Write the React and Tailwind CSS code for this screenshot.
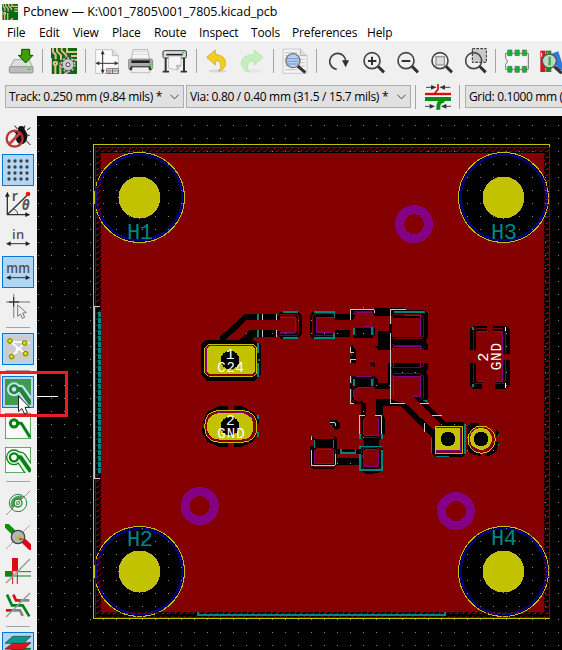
import React from "react";

const Icon = ({ x, y, children }) => (
  <svg className="block h-[26px] w-[26px] shrink-0" viewBox={`${x} ${y} 78 78`} fill="none">
    {children}
  </svg>
);

const Tool = ({ x, y = 144, children }) => (
  <div className="flex h-[34px] w-[34px] shrink-0 items-center justify-center">
    <Icon x={x} y={y}>{children}</Icon>
  </div>
);

const SideTool = ({ y, on, children }) => (
  <div className="flex h-[34px] w-9 shrink-0 items-center justify-center">
    <div className={on ? "flex h-8 w-8 items-center justify-center border border-[#0078d7] bg-[#b3d7f3]" : "flex h-8 w-8 items-center justify-center"}>
      <Icon x={15} y={y}>{children}</Icon>
    </div>
  </div>
);

const VSep = () => (
  <div className="flex w-[9px] shrink-0 justify-center">
    <div className="h-6 w-px bg-[#a5a5a5]" />
  </div>
);
const HSep = () => (
  <div className="flex h-[9px] w-9 shrink-0 items-center justify-center">
    <div className="h-px w-6 bg-[#a5a5a5]" />
  </div>
);

const Lens = ({ cx, cy, fill = "none", children }) => (
  <>
    <path d={`M${cx + 17} ${cy + 16}L${cx + 36} ${cy + 35}`} stroke="#303030" strokeWidth="9" />
    <circle cx={cx} cy={cy} r="24" fill={fill} stroke="#454545" strokeWidth="5" />
    {children}
  </>
);

const Board = ({ x, y }) => (
  <g>
    <rect x={x} y={y} width="78" height="78" fill="#0a6a12" />
    <g transform={`translate(${x} ${y})`} stroke="#e3c08f" strokeWidth="6">
      <path d="M6 0V12L14 20V34M18 0V10L30 22V36M32 0V8L46 22V30M48 0V12H78M60 24H78M0 30V78M13 48V78" />
      <circle cx="13" cy="46" r="5" fill="#0a6a12" />
      <path d="M40 78L54 70M60 36H78M28 44V78" />
    </g>
  </g>
);

const MENUS = [
  ["File", "w-8"], ["Edit", "w-[34px]"], ["View", "w-[39px]"], ["Place", "w-[42px]"], ["Route", "w-[45px]"],
  ["Inspect", "w-[52px]"], ["Tools", "w-[41px]"], ["Preferences", "w-[75px]"], ["Help", "w-10"],
];

const Combo = ({ label, className, textClass }) => (
  <div className={`flex h-[23px] shrink-0 items-center justify-between border border-[#adadad] bg-[#e1e1e1] pl-[3px] pr-1 ${className}`}>
    <span className={`whitespace-pre leading-none ${textClass}`}>{label}</span>
    <svg className="h-[6px] w-[9px] shrink-0" viewBox="0 0 9 6" fill="none" stroke="#444"><path d="M.5 .8L4.5 4.8L8.5 .8" /></svg>
  </div>
);

function MainToolbar() {
  return (
    <div className="flex h-10 w-[700px] items-center pl-1">
      <Tool x={24}>
        <path d="M30 202L42 179H88L98 202" fill="#dedede" stroke="#888" strokeWidth="2" />
        <rect x="28" y="200" width="71" height="19" rx="3" fill="#bcbcbc" stroke="#777" strokeWidth="2" />
        <rect x="83" y="205" width="8" height="5" fill="#28e020" />
        <path d="M65 148H89V166H99L77 189L55 166H65Z" fill="#3c9e08" stroke="#174d00" strokeWidth="3" />
      </Tool>
      <VSep />
      <Tool x={153}>
        <Board x={153} y={144} />
        <circle cx="204" cy="194" r="21" stroke="#555" strokeWidth="7" strokeDasharray="8 5" />
        <circle cx="204" cy="194" r="18" fill="#ccc" stroke="#444" strokeWidth="3" />
        <circle cx="204" cy="194" r="20" stroke="#c8c8c8" strokeWidth="5" strokeDasharray="6 7" />
        <circle cx="204" cy="194" r="6" fill="#eee" stroke="#444" strokeWidth="3" />
      </Tool>
      <VSep />
      <Tool x={282}>
        <path d="M287 149H337L355 167V220H287Z" fill="#fafafa" stroke="#aaa" strokeWidth="2" />
        <path d="M337 149V167H355" fill="#ddd" stroke="#aaa" strokeWidth="2" />
        <path d="M308 157V216M292 190H350" stroke="#333" strokeWidth="3" />
        <path d="M308 151L314 163H302ZM308 221L314 209H302ZM286 190L298 184V196ZM356 190L344 184V196Z" fill="#333" />
        <path d="M320 206H355V220H320ZM320 213H355M338 206V220" fill="#fff" stroke="#333" strokeWidth="2" />
        <path d="M325 210H332M343 210H350M325 217H332" stroke="#a33" strokeWidth="2" />
      </Tool>
      <Tool x={384}>
        <path d="M394 180L399 149H443L449 180Z" fill="#f4f4f4" stroke="#999" strokeWidth="2" />
        <path d="M401 155H441M399 163H443" stroke="#ddd" strokeWidth="3" />
        <rect x="385" y="177" width="73" height="31" rx="5" fill="#a9a9a9" stroke="#777" strokeWidth="2" />
        <path d="M394 181H449V189H394Z" fill="#222" />
        <path d="M393 199H450L455 211H388Z" fill="#222" />
        <path d="M398 202H445L450 218H393Z" fill="#eee" stroke="#aaa" strokeWidth="2" />
        <rect x="447" y="193" width="6" height="4" fill="#2d2" />
      </Tool>
      <Tool x={486}>
        <path d="M497 170V213M552 170V213" stroke="#333" strokeWidth="6" />
        <path d="M488 215H507M542 215H561" stroke="#333" strokeWidth="5" />
        <rect x="489" y="152" width="70" height="22" rx="4" fill="#ddd" stroke="#333" strokeWidth="3" />
        <path d="M499 164H548" stroke="#222" strokeWidth="5" />
        <rect x="546" y="156" width="7" height="4" fill="#2d2" />
        <path d="M506 168H543V196L532 210L506 205Z" fill="#f5f5f5" stroke="#aaa" strokeWidth="2" />
        <path d="M532 210L530 196H543" fill="#ccc" stroke="#999" strokeWidth="2" />
      </Tool>
      <VSep />
      <Tool x={615}>
        <ellipse cx="652" cy="213" rx="27" ry="5" fill="#d9d9d9" />
        <path d="M620 172L646 150V163Q677 166 677 191Q675 208 656 214Q666 202 661 190Q658 182 646 182V195Z" fill="#f3ce20" stroke="#c8a000" strokeWidth="2" />
      </Tool>
      <Tool x={717}>
        <ellipse cx="757" cy="213" rx="27" ry="5" fill="#e6e6e6" />
        <path d="M789 172L763 150V163Q723 166 724 191Q727 208 746 215Q738 202 744 190Q750 182 763 182V195Z" fill="#c4efbd" stroke="#a9dda2" strokeWidth="2" />
      </Tool>
      <VSep />
      <Tool x={3}>
        <path d="M6 147H58L78 167V220H6Z" fill="#f4f4f4" stroke="#b5b5b5" strokeWidth="2" />
        <path d="M58 147V167H78" fill="#ddd" stroke="#999" strokeWidth="2" />
        <path d="M12 158H50M12 167H54M12 178H72M12 188H72M12 198H72M12 209H50" stroke="#aaa" strokeWidth="2" />
        <path d="M50 198L73 218" stroke="#333" strokeWidth="9" />
        <circle cx="36" cy="182" r="21" fill="#b5cff2" stroke="#777" strokeWidth="4" />
        <path d="M19 176H53M18 184H54M20 192H52" stroke="#7a95c8" strokeWidth="3" />
      </Tool>
      <VSep />
      <Tool x={132}>
        <path d="M167 208A24 24 0 1 1 194 185" stroke="#404040" strokeWidth="5" />
        <path d="M183 181H204L194 202Z" fill="#303030" />
      </Tool>
      <Tool x={234}><Lens cx={273} cy={182}><path d="M261 183H286M273 170V195" stroke="#303030" strokeWidth="6" /></Lens></Tool>
      <Tool x={336}><Lens cx={375} cy={182}><path d="M362 183H388" stroke="#303030" strokeWidth="6" /></Lens></Tool>
      <Tool x={438}><Lens cx={477} cy={182}><rect x="465" y="170" width="25" height="25" fill="#ddd" stroke="#999" strokeWidth="4" /></Lens></Tool>
      <Tool x={540}>
        <rect x="574" y="146" width="42" height="41" fill="#c9c9c9" stroke="#222" strokeWidth="3" strokeDasharray="8 4" />
        <Lens cx={578} cy={182} />
      </Tool>
      <VSep />
      <Tool x={669}>
        <path d="M674 160H742V208H674V193Q684 183 674 176Z" fill="#f6f6f6" stroke="#777" strokeWidth="3" />
        <path d="M680 150H693V167H680ZM702 150H715V167H702ZM724 150H737V167H724ZM680 199H693V217H680ZM702 199H715V217H702ZM724 199H737V217H724Z" fill="#00c020" stroke="#666" strokeWidth="2" />
      </Tool>
      <Tool x={771}>
        <path d="M778 152H793V216H778Z" fill="#d9141a" />
        <path d="M794 152H811V216H794Z" fill="#17902a" />
        <path d="M814 160L832 154L849 207L832 216Z" fill="#3478dc" />
        <path d="M782 158V170M800 158V170" stroke="#fff" strokeWidth="3" />
        <path d="M820 200L842 220" stroke="#333" strokeWidth="9" />
        <circle cx="805" cy="183" r="21" fill="#b9dcc0" stroke="#555" strokeWidth="4" />
        <path d="M806 170V196" stroke="#45a555" strokeWidth="7" />
      </Tool>
    </div>
  );
}

function SideBar() {
  return (
    <div className="flex w-9 shrink-0 flex-col overflow-hidden pt-[3px]">
      <SideTool y={24}>
        <path d="M44 32L52 42M75 32L69 44M81 45L91 38M80 60L89 61M78 76L91 90M40 48L53 57" stroke="#111" strokeWidth="3" />
        <ellipse cx="64" cy="64" rx="18" ry="24" fill="#111" /><circle cx="64" cy="43" r="10" fill="#111" />
        <circle cx="44" cy="71" r="24" stroke="#bd3434" strokeWidth="7" />
        <path d="M28 87L60 54" stroke="#c84242" strokeWidth="8" />
      </SideTool>
      <SideTool y={126} on>
        <g fill="#404040">
          {[138, 156, 174, 192].map((y) => [27, 45, 63, 81].map((x) => <circle key={`${x}-${y}`} cx={x} cy={y} r="5" />))}
        </g>
      </SideTool>
      <SideTool y={228}>
        <path d="M22 240V299H84M23 298L83 239" stroke="#333" strokeWidth="4" />
        <path d="M22 230L29 245H15ZM91 299L76 292V306Z" fill="#222" />
        <path d="M37 284Q52 281 53 298" stroke="#555" strokeWidth="3" />
        <circle cx="84" cy="237" r="7" fill="#f11" />
        <text x="35" y="257" className="font-['Open_Sans',sans-serif] text-[44px] font-semibold" fill="#5a5050">r</text>
        <text x="65" y="285" className="font-['Open_Sans',sans-serif] text-[40px] font-bold italic" fill="#5a5050">θ</text>
      </SideTool>
      <SideTool y={330}>
        <text x="36" y="371" className="font-['Open_Sans',sans-serif] text-[39px] font-semibold" textLength="37" fill="#555">in</text>
        <path d="M27 386H82" stroke="#333" strokeWidth="3" /><path d="M18 386L32 379V393ZM91 386L77 379V393Z" fill="#222" />
      </SideTool>
      <SideTool y={432} on>
        <text x="19" y="474" className="font-['Open_Sans',sans-serif] text-[44px] font-semibold" textLength="71" lengthAdjust="spacingAndGlyphs" fill="#4d5055">mm</text>
        <path d="M27 488H82" stroke="#333" strokeWidth="3" /><path d="M18 488L32 481V495ZM91 488L77 481V495Z" fill="#222" />
      </SideTool>
      <SideTool y={9}>
        <path d="M18 36H30M54 36H90M41 12V24M41 50V84" stroke="#999" strokeWidth="4" />
        <path d="M27 36H57M41 22V50" stroke="#333" strokeWidth="4" />
        <path d="M53 45V79L61 72L67 85L74 82L68 69L79 68Z" fill="#f2f2f2" stroke="#777" strokeWidth="3" />
      </SideTool>
      <HSep />
      <SideTool y={138} on>
        <rect x="15" y="138" width="78" height="78" fill="#ccc" />
        <path d="M30 154L76 191M74 159L35 199M30 154L90 159M50 172V190" stroke="#fff" strokeWidth="5" />
        <g fill="#d8dc00" stroke="#777a00" strokeWidth="3"><circle cx="30" cy="153" r="7" /><circle cx="74" cy="159" r="7" /><circle cx="35" cy="200" r="7" /><circle cx="77" cy="191" r="7" /></g>
      </SideTool>
      <HSep />
      <SideTool y={267} on>
        <rect x="15" y="267" width="78" height="78" fill="#3e9b50" />
        <path d="M42 298H62L93 342" stroke="#c7e3f3" strokeWidth="27" strokeLinejoin="round" />
        <circle cx="42" cy="298" r="21" fill="#c7e3f3" />
        <path d="M42 298H62L93 342" stroke="#23843a" strokeWidth="14" strokeLinejoin="round" />
        <circle cx="42" cy="298" r="11" fill="#c7e3f3" stroke="#23843a" strokeWidth="8" />
      </SideTool>
      <SideTool y={369}>
        <rect x="16" y="370" width="76" height="76" fill="#fbfdfb" stroke="#4b9850" strokeWidth="3" />
        <path d="M45 400H64L90 442" stroke="#078014" strokeWidth="9" strokeLinejoin="round" />
        <circle cx="42" cy="400" r="11" fill="#fff" stroke="#078014" strokeWidth="9" />
      </SideTool>
      <SideTool y={471}>
        <rect x="16" y="472" width="76" height="76" fill="#fbfdfb" stroke="#4b9850" strokeWidth="3" />
        <path d="M42 502H62L92 546" stroke="#078014" strokeWidth="35" strokeLinejoin="round" />
        <circle cx="42" cy="502" r="24" fill="#078014" />
        <path d="M42 502H62L94 549" stroke="#eaf7e8" strokeWidth="28" strokeLinejoin="round" />
        <circle cx="42" cy="502" r="20" fill="#eaf7e8" />
        <path d="M42 502H62L92 545" stroke="#078014" strokeWidth="12" strokeLinejoin="round" />
        <circle cx="42" cy="502" r="12" fill="#fff" stroke="#078014" strokeWidth="7" />
      </SideTool>
      <HSep />
      <SideTool y={60}>
        <circle cx="54" cy="99" r="26" fill="#f4f8f4" stroke="#25843a" strokeWidth="3" />
        <path d="M36 117A26 26 0 0 1 72 81Z" fill="#4ca258" />
        <circle cx="54" cy="99" r="12" fill="#e9f7e9" stroke="#25843a" strokeWidth="4" /><circle cx="54" cy="99" r="5" stroke="#25843a" strokeWidth="2" />
        <path d="M18 135L90 63" stroke="#999" strokeWidth="3" />
      </SideTool>
      <SideTool y={162}>
        <path d="M15 162L50 196" stroke="#08910c" strokeWidth="16" /><path d="M60 202L96 237" stroke="#db0710" strokeWidth="16" />
        <path d="M18 237L90 165" stroke="#aaa" strokeWidth="3" />
        <circle cx="54" cy="201" r="20" fill="#b5b5b5" stroke="#444" strokeWidth="4" />
        <path d="M62 193V208H47Z" fill="#c4bc00" /><path d="M56 209L63 203L69 209Z" fill="#db0710" />
      </SideTool>
      <SideTool y={264}>
        <path d="M36 264H54V304H36Z" fill="#dc0b12" /><path d="M38 304V342M52 304V342" stroke="#dc0b12" strokeWidth="3" />
        <path d="M15 303H36V320H15Z" fill="#078515" /><path d="M54 305H93M36 318H93" stroke="#078515" strokeWidth="3" />
        <path d="M18 339L90 267" stroke="#999" strokeWidth="4" />
      </SideTool>
      <SideTool y={366}>
        <path d="M56 391H88M36 421H60L68 438" stroke="#858585" strokeWidth="8" />
        <path d="M40 374L48 391H60M18 421H36" stroke="#d90e14" strokeWidth="8" />
        <path d="M21 374L36 406H68L88 439" stroke="#087f17" strokeWidth="8" />
        <path d="M18 441L90 369" stroke="#999" strokeWidth="4" />
      </SideTool>
      <HSep />
      <SideTool y={495} on>
        <path d="M15 554L40 535H93L70 557Z" fill="#0a9212" stroke="#333" strokeWidth="2" />
        <path d="M15 537L40 518H93L70 539Z" fill="#e01418" stroke="#333" strokeWidth="2" />
        <path d="M15 520L38 499H93L70 520Z" fill="#079b96" stroke="#333" strokeWidth="2" />
      </SideTool>
    </div>
  );
}

const K = "#000";
const R = "#840000";
const T = "#008484";
const P = "#840084";
const Y = "#c2c200";
const W = "#c8c8c8";
const mono = "font-['Liberation_Mono',monospace]";

const Hole = ({ cx, cy, label, ty }) => (
  <g>
    <circle cx={cx} cy={cy} r="45" fill={K} />
    <circle cx={cx} cy={cy} r="42.7" fill="none" stroke="#000084" strokeWidth="2" />
    <circle cx={cx} cy={cy} r="45" fill="url(#dots)" stroke={Y} />
    <circle cx={cx} cy={cy} r="21" fill={Y} />
    <text x={cx - 12.5} y={ty} textLength="26" className={`${mono} text-[22px]`} fill={T}>{label}</text>
  </g>
);

const Line = ({ d, c, w = 3 }) => <path d={d} stroke={c} strokeWidth={w} fill="none" />;

function LeftPads() {
  return (
    <g transform="translate(190 300) scale(.33333)">
      <path d="M90 122V110L103 98L165 42H262V60H170L105 122V135ZM135 132L180 90H262V110H195L182 124V132Z" fill={K} />
      <path d="M201 42H207V60H201ZM201 90H207V110H201Z" fill={T} />
      <Line c={W} d="M217 42V60M260 42V60M217 90V110M260 90V110" />
      <path d="M262 45L272 35H325L335 45V106L325 116H272L262 106V94H270V103H314L320 97V53L314 48H270V60H262Z" fill={K} />
      <Line c={R} d="M264 47L270 43H320L327 50V100L320 107H270L264 102" />
      <Line c={T} w={5} d="M279 36H323M279 114H323" />
      <Line c={P} d="M270 52H317V96M270 97H315" />
      <path d="M48 120H190L212 134V225L195 242H50L34 225V134Z" fill={K} />
      <path d="M56 133H190L201 144V218L190 229H56L45 218V144Z" fill={R} stroke={Y} strokeWidth="3" />
      <path d="M60 138H186L195 146V216L186 223H60L52 215V146Z" fill={Y} />
      <Line c={P} d="M50 142V220M60 137H80M170 137H186" />
      <Line c={T} w={5} d="M205 130V160M208 176V183M205 190V232" />
      <path d="M86 318H155L190 336L206 355V372H198V395H206L190 425L155 440H86L52 425L36 395V385H44V370H36L52 335Z" fill={K} />
      <path d="M113 315H131V335H113ZM114 422H131V442H114Z" fill={R} />
      <path d="M92 331H155Q201 334 201 379Q201 427 155 427H92Q44 427 44 379Q44 331 92 331Z" fill={R} stroke={Y} strokeWidth="3" />
      <path d="M92 339H152Q190 341 190 379Q190 418 152 419H92Q51 418 51 379Q51 341 92 339Z" fill={Y} />
      <Line c={P} d="M82 338H112M133 338H160L185 352" />
      <Line c={T} w={4} d="M204 346V356M204 396V410" />
      <circle cx="120" cy="180" r="28" fill={K} /><circle cx="120" cy="378" r="28" fill={K} />
      <g fill="#fff" className={mono}>
        <text x="107" y="177" className="text-[44px]">1</text>
        <text x="82" y="216" textLength="80" className="text-[42px]">C24</text>
        <text x="108" y="375" className="text-[44px]">2</text>
        <text x="82" y="414" textLength="82" className="text-[42px]">GND</text>
      </g>
      <g fill="#888"><rect x="168" y="98" width="3" height="3" /><rect x="246" y="98" width="3" height="3" /><rect x="285" y="98" width="3" height="3" /><rect x="324" y="60" width="3" height="3" /></g>
    </g>
  );
}

function CenterPads() {
  return (
    <g transform="translate(300 300) scale(.33333)">
      {/* power rail copper clearance */}
      <path d="M40 33H104V42H151V28H224V24H316V30H375L384 42V112L377 124L384 135V150H366V144H276V150H271V103H235V93H268V72H104V89H151V111H104V117H40L31 105V45Z" fill={K} />
      <path d="M48 50H104V60H160L168 38H216L224 48H278V54H364V112H276V72H217V80H190V88H104V99H48Z" fill={R} />
      <Line c={R} d="M104 44L98 40H49L39 49V101L48 108H98M160 44L165 34H214L221 42M278 45H362L370 54V108L362 116H282L276 108" />
      <Line c={P} d="M104 52H49V98H97M160 44L170 37H215M311 48H362V110M190 81H217" />
      <Line c={T} w={5} d="M43 36H104V52M43 114H103V98M282 36H374" />
      <Line c={W} d="M151 60V30H190M190 29H223V40M271 72V30H318" />
      {/* vertical neck and right pad column */}
      <path d="M233 93H271V265H228V249H264V185H235V93Z" fill={K} />
      <path d="M168 150H384V188H168Z" fill={R} />
      <path d="M276 188H384V207L377 215L384 228V295L372 306L348 291H364V229H276V207H271V188Z" fill={K} />
      <path d="M283 228H363V290H283Z" fill={R} />
      <Line c={R} d="M276 132L283 136H362L370 144V150M276 190V202H362L370 197V188M276 229L283 222H360L371 230V290L362 298M282 116H363L371 108" />
      <Line c={P} d="M282 150V139H361V150M282 190V200M361 190V200M282 292V229H362V290H340" />
      <Line c={W} d="M271 100V310H315" />
      <path d="M368 299H381V306H368Z" fill={T} />
      {/* middle column */}
      <path d="M158 84H224V108L216 115H165L158 108ZM151 142L158 136L168 153V188H150V170L158 164L151 157ZM226 139H236V151ZM207 179L214 185L225 190V202L213 197Z" fill={K} />
      <Line c={T} w={5} d="M162 84V106M216 80V106" />
      <Line c={W} d="M151 142V157H161M168 179H151V188" />
      <Line c={R} d="M153 90H158V112L166 118M222 82V110L214 118" />
      <Line c={P} d="M207 181L220 194V199" />
      <path d="M151 228H224L235 238V250H271V267H224V260L216 263H168L160 270V294L170 304H190V311H160L151 304Z" fill={K} />
      <Line c={R} d="M156 231V253L166 262M222 232V255L214 262M156 266V300L166 307" />
      <Line c={T} w={5} d="M162 236V258M216 236V258" />
      <Line c={P} d="M167 230H216M215 264H170L161 273V295L168 301" />
      <Line c={W} d="M151 228V250M151 267V310H162" />
      {/* lower chain and the diagonal track to the header */}
      <path d="M182 310H198V346L190 356V398L198 408H225L237 398V355L228 346V297H271L290 304L318 312L405 393L396 412L300 318H248V342L254 356V400L236 423V438L250 450V507L240 517L220 521H198L179 509V495H111V470H179V450L191 438V422L179 405V350L182 346Z" fill={K} />
      <path d="M340 292L348 290L374 304L438 366L424 374Z" fill={K} />
      <Line c={W} d="M271 297V310H315M361 310H386M397 346H426" />
      <path d="M191 353H237V408H191ZM190 450H237V500H190ZM104 465H190V473H104Z" fill={R} />
      <Line c={R} d="M188 347L182 356V402L190 412H233L244 402V355L236 347M190 444H232L244 454V501L232 509H195L184 500V475M184 462V452L192 444" />
      <Line c={P} d="M236 355V402L231 408H195L190 401V360M190 480V458L198 448H230L237 458V490L230 499H198L190 490" />
      <Line c={W} d="M179 402V346H195M224 346H245V402M374 369V395" />
      <Line c={T} w={5} d="M181 402V418M246 402V418M245 440H181V510H246V450" />
      {/* small left pads */}
      <path d="M31 407L45 417H102V407L111 417V496L100 508H43L31 498V442L42 433V422L31 415ZM91 361H109L120 370V383L107 391L90 375ZM111 447H182V462H111Z" fill={K} />
      <rect x="43" y="450" width="58" height="43" fill={R} />
      <Line c={R} d="M38 424V435L49 445H98L108 454V493L99 501H46L36 492V455M92 378L108 365" />
      <Line c={P} d="M101 488V455L94 449H48L43 456V484L51 490H100M92 375L102 388" />
      <Line c={W} d="M35 409V420M34 449V496H104M106 463V496M91 368H106V378" />
      <Line c={T} w={5} d="M44 420V445M101 420V445M123 448V459H167V448" />
      <g fill="#999">
        {[[34, 60], [34, 99], [73, 99], [112, 99], [190, 21], [190, 99], [229, 255], [268, 255], [307, 216], [346, 216], [190, 333], [112, 489], [151, 489], [190, 411]].map(([x, y]) => <rect key={`${x}/${y}`} x={x} y={y} width="3" height="3" />)}
      </g>
    </g>
  );
}

function RightPads() {
  return (
    <g transform="translate(400 300) scale(.33333)">
      <path d="M219 78H261V93H228V150H210V88ZM280 78H319L329 88V162H308V94H280ZM210 190H228V244H246V266H220L210 256ZM308 180H329V256L319 266H285V244H308Z" fill={K} />
      <Line c={R} d="M220 150V94L227 87H261M280 87H308L316 95V160M220 190V245L228 252H245M285 252H308L316 243V182" />
      <Line c={P} d="M230 94H261M281 94H308V162M308 181V244H285M230 244H246" />
      <path d="M216 82H222V90H216ZM216 252H222V260H216Z" fill={T} />
      <Line c="#fff" d="M316 80V94M317 250V264" />
      <g transform="rotate(-90)" fill="#fff" className={mono}>
        <text x="-185" y="264" className="text-[46px]">2</text>
        <text x="-211" y="302" textLength="82" className="text-[43px]">GND</text>
      </g>
      <path d="M132 366H188L198 376V460L188 472H107L95 460V400L106 382Z" fill={K} />
      <rect x="106" y="379" width="82" height="82" fill={R} stroke={Y} strokeWidth="3" />
      <rect x="109" y="383" width="72" height="70" fill={Y} />
      <Line c={P} d="M109 452H181V388" /><circle cx="144" cy="417" r="22" fill={K} />
      <Line c={T} w={4} d="M95 415V460M107 470H147M195 372V461" />
      <path d="M202 378L215 370H237V384L207 413H202ZM200 420L212 445L243 458V468L215 463L200 446ZM287 388L296 397V407H287ZM284 427H296L289 454L270 467H255L276 448Z" fill={K} />
      <circle cx="245" cy="419" r="41" fill={R} stroke={Y} strokeWidth="3" />
      <circle cx="243" cy="417" r="33" fill={Y} /><circle cx="243" cy="417" r="22" fill={K} />
      <Line c={P} d="M210 409Q214 386 235 384M221 442L238 451" />
      <Line c={T} d="M295 402V408M295 431V437" />
      <g fill="#999">{[[318, 99], [318, 138], [318, 216], [318, 255], [123, 372], [162, 372], [201, 411], [201, 450], [279, 450]].map(([x, y]) => <rect key={`${x}/${y}`} x={x} y={y} width="3" height="3" />)}</g>
    </g>
  );
}

function Canvas() {
  return (
    <svg className="ml-px block h-[534px] w-[525px] shrink-0 bg-black" viewBox="37 116 525 534" shapeRendering="crispEdges">
      <defs>
        <pattern id="dots" x="38" y="125" width="13" height="13" patternUnits="userSpaceOnUse"><rect width="1" height="1" fill="#848484" /></pattern>
        <pattern id="hatch" x="95" y="147" width="6" height="6" patternUnits="userSpaceOnUse"><path d="M0 4H1V5H0ZM1 4H3V5H1ZM2 3H4V4H2ZM4 2H5V3H4ZM5 1H6V2H5Z" fill={R} /></pattern>
      </defs>
      <rect x="37" y="116" width="525" height="534" fill="url(#dots)" />
      <rect x="101" y="153" width="443" height="459" fill={R} />
      {[[139.5, 197.5, "H1", 239], [503.5, 197.5, "H3", 239], [139.5, 571.5, "H2", 546], [503.5, 571.5, "H4", 545]].map(([cx, cy, l, ty]) => <Hole key={l} cx={cx} cy={cy} label={l} ty={ty} />)}
      <path d="M95 147H550V618H95ZM101 153V612H544V153Z" fillRule="evenodd" fill="url(#hatch)" />
      <path d="M549.5 147.5H95.5V617.5H549.5Z" stroke={R} fill="none" />
      <path d="M549.5 147V144.5H93.5V618.5H549.5" stroke={Y} fill="none" />
      <path d="M99 312V474" stroke={T} strokeWidth="3" strokeDasharray="5 1" />
      <path d="M100 306.5H94.5V478.5H100" stroke={W} fill="none" />
      <path d="M197.5 612V615H444.5V612" stroke={T} strokeWidth="2" fill="none" />
      {[[414, 224.2], [199.7, 506], [456, 511]].map(([cx, cy]) => <circle key={cx} cx={cx} cy={cy} r="14.5" fill="none" stroke={P} strokeWidth="9" />)}
      <CenterPads /><LeftPads /><RightPads />
    </svg>
  );
}

export default function App() {
  return (
    <div className="relative flex h-[650px] w-[562px] flex-col overflow-hidden bg-[#f0f0f0] font-['Open_Sans',sans-serif] text-xs text-black">
      <div className="flex h-6 shrink-0 items-center bg-white pl-[2px]">
        <svg className="h-4 w-4" viewBox="0 0 78 78" fill="none"><Board x={0} y={0} /></svg>
        <span className="ml-[5px] whitespace-nowrap text-[12.5px] leading-none tracking-[-0.04px]">Pcbnew — K:\001_7805\001_7805.kicad_pcb</span>
      </div>
      <div className="flex h-[17px] shrink-0 items-center bg-white pl-[7px]">
        {MENUS.map(([m, w]) => <span key={m} className={`${w} shrink-0 whitespace-nowrap leading-none tracking-[-0.15px]`}>{m}</span>)}
      </div>
      <MainToolbar />
      <div className="flex h-[35px] w-[700px] shrink-0 items-start pl-[5px] pt-1">
        <Combo label="Track: 0.250 mm (9.84 mils) *" className="w-[179px]" textClass="tracking-[-0.31px]" />
        <Combo label="Via: 0.80 / 0.40 mm (31.5 / 15.7 mils) *" className="ml-[2px] w-[225px]" textClass="tracking-[-0.31px]" />
        <VSep />
        <div className="-mt-px ml-[5px]">
          <Icon x={432} y={252}>
            <path d="M432 282H510" stroke="#df0710" strokeWidth="7" /><path d="M432 297H510" stroke="#07900a" strokeWidth="12" />
            <path d="M471 252V268L460 281" stroke="#df0710" strokeWidth="5" /><path d="M490 302Q469 302 472 329" stroke="#07900a" strokeWidth="12" />
            <path d="M435 262H456M486 262H508M432 319H450M491 319H510" stroke="#444" strokeWidth="3" />
            <path d="M467 262L450 255V269ZM475 262L492 255V269ZM462 319L446 312V326ZM480 319L496 312V326Z" fill="#333" />
          </Icon>
        </div>
        <div className="ml-1"><VSep /></div>
        <Combo label="Grid: 0.1000 mm (3.94 mils)" className="ml-px w-[210px]" textClass="tracking-[-0.35px]" />
      </div>
      <div className="flex h-[534px] w-[562px] shrink-0"><SideBar /><Canvas /></div>
      <svg className="pointer-events-none absolute left-0 top-[370px] h-12 w-[70px]" viewBox="0 370 70 48" fill="none">
        <path d="M37 396.5H58" stroke="#fff" />
        <rect x="-1" y="372.5" width="67.5" height="43" stroke="#ed1c24" strokeWidth="3" />
        <path d="M18.5 396V411.5L22 408.5L24.5 414L27.3 412.7L25 407.3H29.5Z" fill="#fff" stroke="#111" strokeWidth=".9" />
      </svg>
    </div>
  );
}
